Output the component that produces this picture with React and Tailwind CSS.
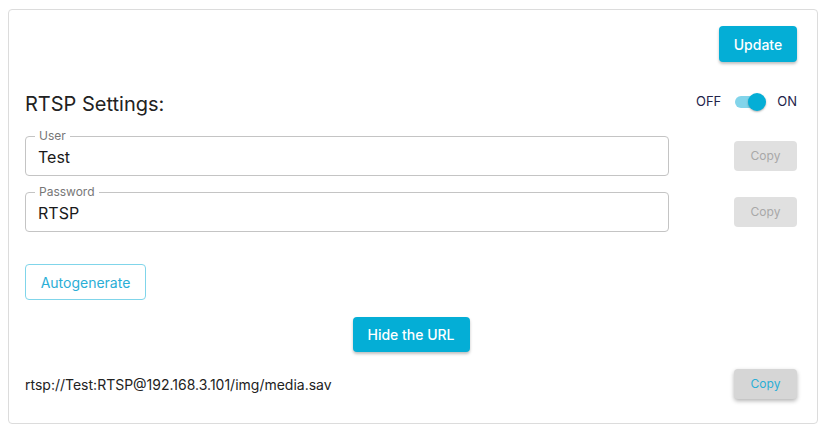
import React, { useState } from 'react';

function Field({ label, value }) {
  return (
    <div className="flex items-center justify-between">
      <div className="relative w-[644px] h-10 border border-[#c4c4c4] rounded flex items-center px-3">
        <span className="absolute -top-[8px] left-[9px] bg-white px-[4px] text-[12px] leading-[14px] text-[#777]">{label}</span>
        <span className="text-[16px] text-[#1a1a1a] pt-[1px]">{value}</span>
      </div>
      <button className="w-[63px] h-[30px] rounded bg-[#e0e0e0] text-[12px] text-[#a8a8a8]">Copy</button>
    </div>
  );
}

export default function App() {
  const [on, setOn] = useState(true);

  return (
    <div className="pl-2 pt-[9px] bg-white min-h-[431px]" style={{ fontFamily: 'Inter, "Noto Sans", sans-serif' }}>
      <div className="w-[810px] h-[415px] border border-[#dcdcdc] rounded pl-4 pr-5 pt-4">

        {/* Top action */}
        <div className="flex justify-end">
          <button className="w-[78px] h-9 rounded bg-[#04aed6] text-white text-[14px] font-medium shadow-[0_2px_3px_rgba(0,0,0,0.25)]">Update</button>
        </div>

        {/* Title + toggle */}
        <div className="mt-[26px] h-7 flex items-center justify-between">
          <h2 className="text-[20px] text-[#222] pt-1">RTSP Settings:</h2>
          <div className="flex items-center gap-[14px] text-[13px] text-[#23234a]">
            <span>OFF</span>
            <button onClick={() => setOn(!on)} className="relative w-[28px] h-[12px] rounded-full bg-[#82d4ea]">
              <span className="absolute -top-[3px] right-[-3px] w-[18px] h-[18px] rounded-full bg-[#04aed6] shadow-[0_1px_2px_rgba(0,0,0,0.3)]"></span>
            </button>
            <span>ON</span>
          </div>
        </div>

        {/* Credentials */}
        <div className="mt-5 flex flex-col gap-4">
          <Field label="User" value="Test" />
          <Field label="Password" value="RTSP" />
        </div>

        <button className="mt-8 w-[121px] h-9 rounded border border-[#80d5ea] text-[14px] text-[#2aaed6]">Autogenerate</button>

        <div className="mt-[17px] flex justify-center">
          <button className="w-[117px] h-[35px] rounded bg-[#04aed6] text-white text-[14px] font-medium shadow-[0_2px_3px_rgba(0,0,0,0.25)]">Hide the URL</button>
        </div>

        {/* URL row */}
        <div className="mt-[17px] flex items-center justify-between">
          <span className="text-[14px] text-[#222]">rtsp://Test:RTSP@192.168.3.101/img/media.sav</span>
          <button className="w-[63px] h-[30px] rounded bg-[#d6d6d6] text-[12px] text-[#2aaed6] shadow-[0_2px_4px_rgba(0,0,0,0.3)]">Copy</button>
        </div>
      </div>
    </div>
  );
}
